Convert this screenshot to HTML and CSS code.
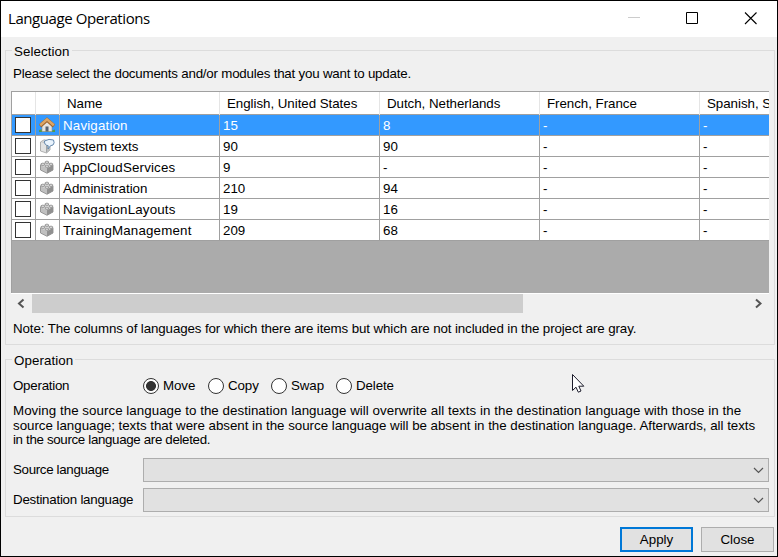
FILE: index.html
```html
<!DOCTYPE html>
<html lang="en">
<head>
<meta charset="utf-8">
<title>Language Operations</title>
<link rel="stylesheet" href="styles.css">
</head>
<body>
<svg class="defs" width="0" height="0">
  <symbol id="brick" viewBox="0 0 16 16">
    <path d="M1.500 6 7.500 3.500 14 6v5L8 14.300 1.500 11z" fill="#c0c0c0" stroke="#858585" stroke-width=".8"/>
    <path d="M1.500 6 7.500 3.500 14 6 8 9.200z" fill="#e2e2e2"/>
    <path d="M8 9.200 14 6v5l-6 3.300z" fill="#909090"/>
    <path d="M2 6V4.700Q4 3.400 5.700 4.700V6Q4 7.200 2 6M6.200 4V2.700Q8 1.400 9.600 2.700V4Q8 5 6.200 4M6.200 8V6.700Q8 5.400 9.600 6.700V8Q8 9 6.200 8M10.300 6V4.700Q12 3.400 13.700 4.700V6Q12 7.200 10.300 6" fill="#dadada" stroke="#808080" stroke-width=".7"/>
  </symbol>
  <symbol id="down" viewBox="0 0 11 7"><path d="M1 1l4.500 4.500L10 1" fill="none" stroke="#555" stroke-width="1.200"/></symbol>
</svg>
<div class="window">
  <header class="titlebar">
    <h1>Language Operations</h1>
    <svg class="controls" width="132" height="14" viewBox="0 0 132 14">
      <path d="M1 5.500h12" stroke="#ccc"/>
      <path d="M59.500.500h11v11h-11z" fill="none" stroke="#000"/>
      <path d="M118 .500l11.500 11.500M129.500 .500L118 12" stroke="#000" stroke-width="1.100"/>
    </svg>
  </header>

  <section class="group selection">
    <h2>Selection</h2>
    <p class="intro">Please select the documents and/or modules that you want to update.</p>
    <div class="grid">
      <div class="row head"><span></span><span></span><span>Name</span><span>English, United States</span><span>Dutch, Netherlands</span><span>French, France</span><span>Spanish, Spain</span></div>
      <div class="row selected"><span><i class="check"></i></span><span><svg width="16" height="16" viewBox="0 0 16 16"><path d="M0 13Q4 11.500 8 13t8-.500V15H0z" fill="#4f9b4b"/><path d="M3 7.500 8 3l5 4.500V14.500H3z" fill="#e6e4e0" stroke="#99958d" stroke-width=".6"/><path d="M6.500 14.500V9.500h3v5z" fill="#596271"/><path d="M1 9 8 2.800l7 6.200" fill="none" stroke="#9d632c" stroke-width="3.800"/><path d="M1.200 8.200 8 2.300l6.800 5.900" fill="none" stroke="#dda565" stroke-width="2.500"/></svg></span><span class="name">Navigation</span><span>15</span><span>8</span><span>-</span><span>-</span></div>
      <div class="row"><span><i class="check"></i></span><span><svg width="16" height="16" viewBox="0 0 16 16"><path d="M1.500 4 5 1.800 11 3v9l-3.500 3-6-2z" fill="#e2e3e3" stroke="#a0a0a0" stroke-width=".8"/><path d="M1.500 4 7.500 5.500V15l3.500-3V3z" fill="#b9bcbd"/><path d="M7.500 6v8.500" stroke="#8e9192" stroke-width=".7"/><path d="M5.500 3Q10 .300 14.500 2q1.500 3-.500 5l-2.500.700-2.500 3.300.200-3.300Q5 7 5.500 3z" fill="#eaf4fd" stroke="#6689ad"/></svg></span><span class="sys">System texts</span><span>90</span><span>90</span><span>-</span><span>-</span></div>
      <div class="row"><span><i class="check"></i></span><span><svg width="16" height="16"><use href="#brick"/></svg></span><span class="name">AppCloudServices</span><span>9</span><span>-</span><span>-</span><span>-</span></div>
      <div class="row"><span><i class="check"></i></span><span><svg width="16" height="16"><use href="#brick"/></svg></span><span>Administration</span><span>210</span><span>94</span><span>-</span><span>-</span></div>
      <div class="row"><span><i class="check"></i></span><span><svg width="16" height="16"><use href="#brick"/></svg></span><span class="name">NavigationLayouts</span><span>19</span><span>16</span><span>-</span><span>-</span></div>
      <div class="row"><span><i class="check"></i></span><span><svg width="16" height="16"><use href="#brick"/></svg></span><span class="name">TrainingManagement</span><span>209</span><span>68</span><span>-</span><span>-</span></div>
    </div>
    <div class="scrollbar">
      <svg width="21" height="19" viewBox="0 0 21 19"><path d="M12.500 5.500 8 9.500l4.500 4" fill="none" stroke="#555" stroke-width="2"/></svg>
      <div class="thumb"></div>
      <svg class="right" width="21" height="19" viewBox="0 0 21 19"><path d="M8 5.500l4.500 4-4.500 4" fill="none" stroke="#555" stroke-width="2"/></svg>
    </div>
    <p class="note">Note: The columns of languages for which there are items but which are not included in the project are gray.</p>
  </section>

  <section class="group operation">
    <h2>Operation</h2>
    <div class="options">
      <span class="label">Operation</span>
      <span class="radio on w65"><i></i>Move</span><span class="radio w63"><i></i>Copy</span><span class="radio w65"><i></i>Swap</span><span class="radio"><i></i>Delete</span>
    </div>
    <div class="description">
      <p class="d1">Moving the source language to the destination language will overwrite all texts in the destination language with those in the</p>
      <p class="d2">source language; texts that were absent in the source language will be absent in the destination language. Afterwards, all texts</p>
      <p class="d3">in the source language are deleted.</p>
    </div>
    <div class="field"><span class="label tight">Source language</span><div class="select"><svg width="11" height="7"><use href="#down"/></svg></div></div>
    <div class="field"><span class="label">Destination language</span><div class="select"><svg width="11" height="7"><use href="#down"/></svg></div></div>
  </section>

  <footer><button class="primary">Apply</button><button>Close</button></footer>
  <svg class="cursor" width="14" height="20" viewBox="0 0 14 20"><path d="M.500.500v16l3.500-3.300 2.300 5 2.700-1.200-2.200-4.800h5z" fill="#fff" stroke="#1c1c2b"/></svg>
</div>
</body>
</html>
```
FILE: styles.css
```css
* { box-sizing: border-box; }
body { margin: 0; font: 13.330px/16px "Liberation Sans", Arial, sans-serif; color: #000; }
h1, h2, p { margin: 0; font-size: inherit; font-weight: normal; white-space: nowrap; }
svg { display: block; flex: none; }
.defs { position: absolute; }
.window { position: relative; width: 778px; height: 557px; border: 1px solid #000; background: #f0f0f0; overflow: hidden; }
.titlebar { height: 36px; background: #fff; display: flex; justify-content: space-between; padding: 0 18px 0 7px; }
.titlebar h1 { font: 15px/35px "Open Sans", "Noto Sans", sans-serif; letter-spacing: -.42px; }
.controls { margin-top: 11px; }

.group { width: 770px; margin-left: 4px; border: 1px solid #dcdcdc; padding: 0 5px; }
.group h2 { width: max-content; margin: -7px 0 0 1px; padding: 0 2px; background: #f0f0f0; letter-spacing: .08px; }
.selection { height: 295px; margin-top: 13px; }
.intro { margin: 6px 0 9px 2px; letter-spacing: -.21px; }
.grid { width: 758px; height: 202px; border: 1px solid #a0a0a0; border-width: 1px 0 0 1px; background: #ababab; overflow: hidden; }
.row { display: grid; grid-template-columns: 24px 24px repeat(5, 160px); width: 848px; height: 21px; line-height: 21px; background: #fff; border-bottom: 1px solid #a0a0a0; }
.row > span { height: 100%; border-right: 1px solid #a0a0a0; padding-left: 3px; white-space: nowrap; }
.row svg { margin-top: 2px; }
.row .name { letter-spacing: .17px; }
.row .sys { letter-spacing: -.08px; }
.head { height: 23px; line-height: 23px; letter-spacing: -.04px; }
.head > span { border-color: #e5e5e5; padding-left: 7px; }
.selected { background: #3399ff; color: #fff; }
.check { display: block; width: 16px; height: 16px; margin-top: 2px; border: 1px solid #333; background: #fff; }
.scrollbar { height: 20px; border-top: 1px solid #fff; display: flex; }
.thumb { width: 491px; background: #cdcdcd; }
.scrollbar .right { margin-left: auto; }
.note { margin: 8px 0 0 2px; letter-spacing: -.11px; }

.operation { height: 158px; margin-top: 14px; }
.label { width: 130px; flex: none; white-space: nowrap; letter-spacing: -.25px; }
.tight { letter-spacing: -.33px; }
.options { display: flex; align-items: center; height: 16px; margin: 9px 0 0 2px; }
.radio { display: flex; gap: 4px; letter-spacing: -.1px; }
.radio i { width: 16px; height: 16px; border: 1px solid #333; border-radius: 50%; background: #fff; }
.on i { background: radial-gradient(circle, #333 4.600px, #fff 5.300px); }
.w65 { width: 65px; }
.w63 { width: 63px; }
.description { height: 44px; margin: 10px 0 10px 2px; line-height: 14.670px; }
.d1 { letter-spacing: .04px; }
.d2 { letter-spacing: -.025px; }
.d3 { letter-spacing: -.34px; }
.field { display: flex; align-items: center; margin: 0 0 6px 2px; height: 24px; }
.select { width: 626px; height: 24px; border: 1px solid #adadad; background: #e1e1e1; display: flex; align-items: center; justify-content: flex-end; padding-right: 4px; }

footer { display: flex; justify-content: flex-end; gap: 8px; padding: 10px 3px 0 0; }
button { width: 73px; height: 25px; padding: 0; border: 1px solid #adadad; background: #e1e1e1; color: #000; font: inherit; }
.primary { border: 2px solid #0078d7; }
.cursor { position: absolute; left: 571px; top: 373px; }
```
